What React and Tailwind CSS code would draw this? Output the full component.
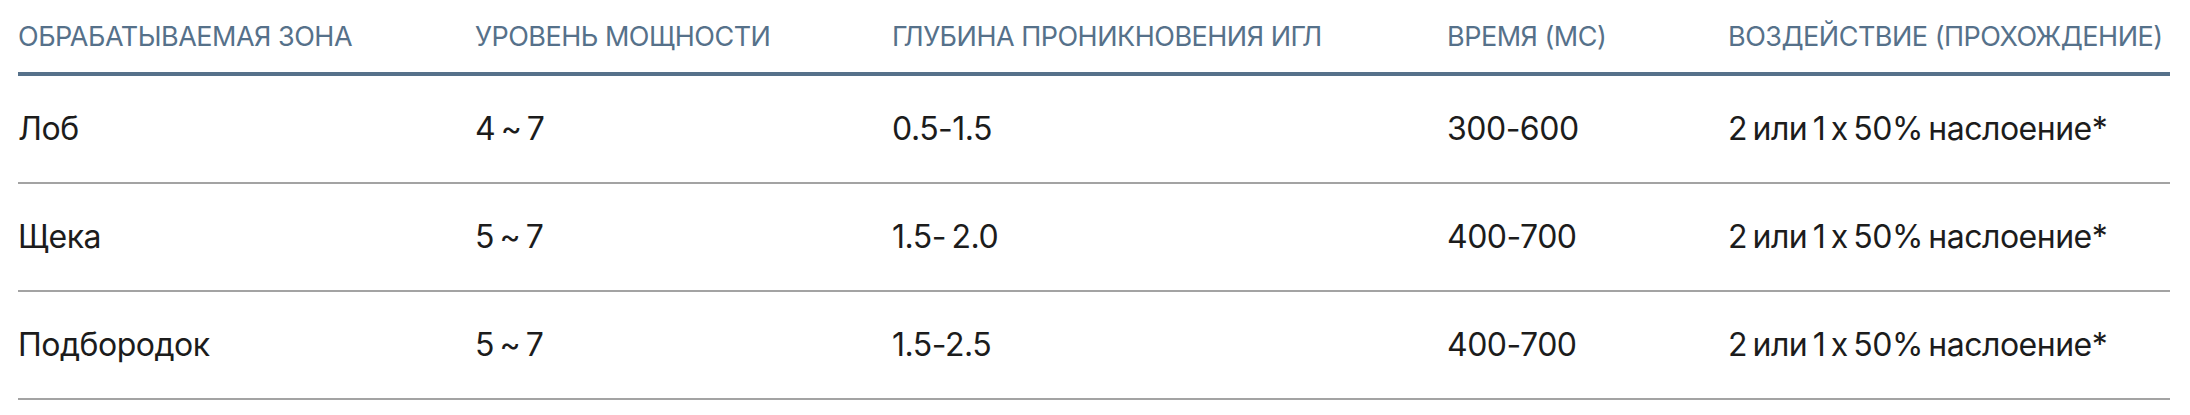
import React from "react";

const headers = [
  "ОБРАБАТЫВАЕМАЯ ЗОНА",
  "УРОВЕНЬ МОЩНОСТИ",
  "ГЛУБИНА ПРОНИКНОВЕНИЯ ИГЛ",
  "ВРЕМЯ (МС)",
  "ВОЗДЕЙСТВИЕ (ПРОХОЖДЕНИЕ)",
];

const rows = [
  ["Лоб", "4 ~ 7", "0.5-1.5", "300-600", "2 или 1 х 50% наслоение*"],
  ["Щека", "5 ~ 7", "1.5- 2.0", "400-700", "2 или 1 х 50% наслоение*"],
  ["Подбородок", "5 ~ 7", "1.5-2.5", "400-700", "2 или 1 х 50% наслоение*"],
];

export default function App() {
  return (
    <div
      className="w-[2190px] h-[415px] bg-white pl-[18px]"
      style={{ fontFamily: "Inter, 'Noto Sans', sans-serif" }}
    >
      <div className="w-[2152px]">
        <div className="grid grid-cols-[457px_417px_555px_281px_442px] h-[76px] border-b-[4px] border-[#56718a] items-center">
          {headers.map((h) => (
            <div key={h} className="text-[27px] leading-none text-[#56718a] whitespace-nowrap tracking-[-0.5px]">
              {h}
            </div>
          ))}
        </div>
        {rows.map((r, i) => (
          <div
            key={i}
            className="grid grid-cols-[457px_417px_555px_281px_442px] h-[108px] border-b-2 border-[#a3a3a3] items-center"
          >
            {r.map((c, j) => (
              <div
                key={j}
                className="text-[32px] leading-none text-[#1c1c1c] whitespace-nowrap tracking-[-0.5px] [word-spacing:-3px]"
              >
                {c}
              </div>
            ))}
          </div>
        ))}
      </div>
    </div>
  );
}
